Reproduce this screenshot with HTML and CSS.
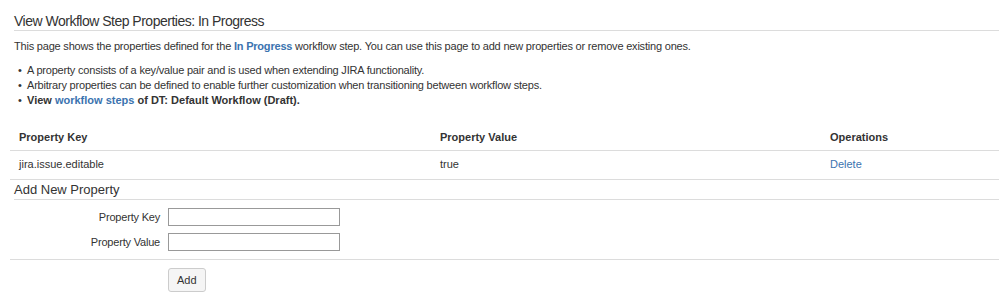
FILE: index.html
```html
<!DOCTYPE html>
<html lang="en">
<head>
<meta charset="utf-8">
<title>View Workflow Step Properties</title>
<link rel="stylesheet" href="styles.css">
</head>
<body>
<div class="page">
  <h2 class="title">View Workflow Step Properties: In Progress</h2>
  <p class="intro">This page shows the properties defined for the <a class="link bold" href="#">In Progress</a> workflow step. You can use this page to add new properties or remove existing ones.</p>
  <ul class="notes">
    <li>A property consists of a key/value pair and is used when extending JIRA functionality.</li>
    <li>Arbitrary properties can be defined to enable further customization when transitioning between workflow steps.</li>
    <li class="bold">View <a class="link" href="#">workflow steps</a> of DT: Default Workflow (Draft).</li>
  </ul>
  <table class="props">
    <thead>
      <tr>
        <th class="col-key">Property Key</th>
        <th class="col-value">Property Value</th>
        <th class="col-ops">Operations</th>
      </tr>
    </thead>
    <tbody>
      <tr>
        <td>jira.issue.editable</td>
        <td>true</td>
        <td><a class="link" href="#">Delete</a></td>
      </tr>
    </tbody>
  </table>
  <h3 class="add-title">Add New Property</h3>
  <form class="add-form">
    <div class="fields">
      <label class="field-label" for="k">Property Key</label>
      <input class="field-input" id="k" type="text">
      <label class="field-label" for="v">Property Value</label>
      <input class="field-input" id="v" type="text">
    </div>
    <div class="buttons">
      <button class="btn" type="button">Add</button>
    </div>
  </form>
</div>
</body>
</html>
```

FILE: styles.css
```css
html, body {
  margin: 0;
  padding: 0;
  background: #fff;
}
body {
  font-family: "Liberation Sans", Arial, sans-serif;
  font-size: 11px;
  line-height: 15px;
  color: #333;
}
.page {
  padding: 12px 0 0 0;
}
.title {
  margin: 0 0 0 14px;
  font-size: 14px;
  font-weight: normal;
  line-height: 18px;
  letter-spacing: -0.5px;
  color: #333;
  border-bottom: 1px solid #dcdcdc;
}
.intro {
  margin: 8px 0 0 14px;
  letter-spacing: -0.2px;
}
.link {
  color: #3b73af;
  text-decoration: none;
}
.bold {
  font-weight: bold;
}
.notes {
  list-style: none;
  margin: 9px 0 0 0;
  padding: 0 0 0 18px;
  letter-spacing: -0.2px;
}
.notes li {
  position: relative;
  padding-left: 9px;
}
.notes li.bold {
  letter-spacing: 0;
}
.notes li::before {
  content: "\2022";
  position: absolute;
  left: 0;
  top: 0;
  font-weight: normal;
}
.props {
  margin: 13px 0 0 10px;
  width: 989px;
  border-collapse: collapse;
}
.props th {
  text-align: left;
  font-weight: bold;
  padding: 9px 9px 5px;
  border-bottom: 1px solid #dcdcdc;
}
.props td {
  padding: 6px 9px 7px;
  border-bottom: 1px solid #dcdcdc;
}
.col-key { width: 403px; }
.col-value { width: 372px; }
.add-title {
  margin: 0 0 0 14px;
  font-size: 13px;
  font-weight: normal;
  line-height: 19px;
  color: #333;
  border-bottom: 1px solid #dcdcdc;
}
.add-form {
  margin: 0 0 0 10px;
}
.fields {
  display: grid;
  grid-template-columns: 150px 172px;
  column-gap: 8px;
  row-gap: 7px;
  align-items: center;
  padding: 8px 0;
  border-bottom: 1px solid #dcdcdc;
}
.field-label {
  text-align: right;
  letter-spacing: -0.2px;
}
.field-input {
  box-sizing: border-box;
  height: 18px;
  width: 172px;
  margin: 0;
  padding: 1px 3px;
  border: 1px solid #999;
  font: inherit;
}
.buttons {
  padding: 8px 0 0 158px;
}
.btn {
  height: 24px;
  padding: 0 8px;
  margin: 0;
  font: inherit;
  font-size: 11px;
  color: #333;
  background: #f5f5f5;
  border: 1px solid #ccc;
  border-radius: 3px;
}
```
